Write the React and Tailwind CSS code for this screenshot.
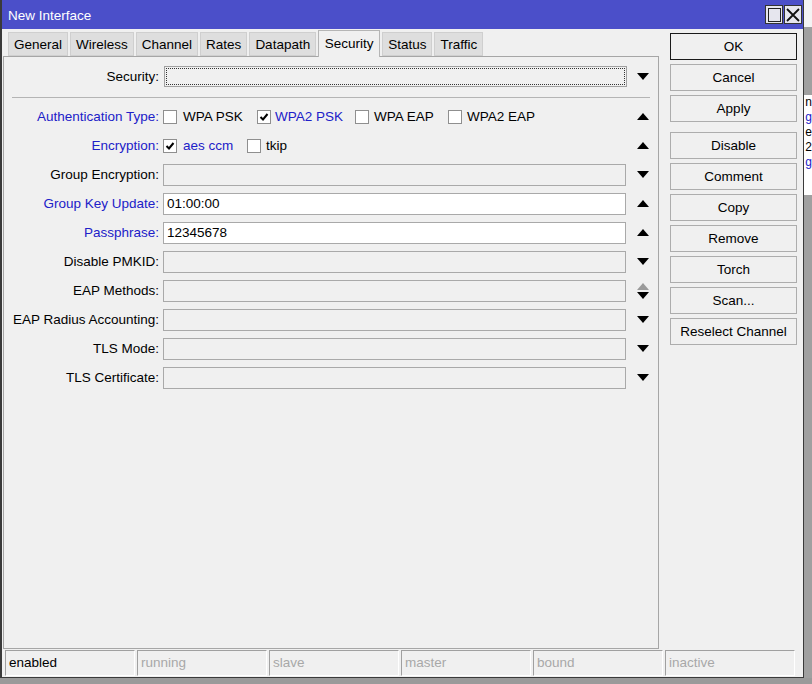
import React from "react";

const F = { fontFamily: '"Liberation Sans", Arial, sans-serif' };

function Down({ color = "#000" }) {
  return (
    <svg width="12" height="7" viewBox="0 0 12 7"><path d="M0 0 H12 L6 7 Z" fill={color} /></svg>
  );
}
function Up({ color = "#000" }) {
  return (
    <svg width="12" height="7" viewBox="0 0 12 7"><path d="M0 7 H12 L6 0 Z" fill={color} /></svg>
  );
}

function Check({ checked }) {
  return (
    <span className="inline-flex w-[14px] h-[14px] bg-white border border-[#8f8f8f] items-center justify-center shrink-0">
      {checked && (
        <svg width="10" height="10" viewBox="0 0 10 10">
          <path d="M1.5 5 L4 7.5 L8.5 2" stroke="#000" strokeWidth="2" fill="none" />
        </svg>
      )}
    </span>
  );
}

function Row({ label, blue, children, arrow }) {
  return (
    <div className="flex items-center h-[29px]">
      <div className={`w-[155px] text-right text-[13.5px] pt-[1px] ${blue ? "text-[#2020c8]" : "text-black"}`}>{label}</div>
      <div className="ml-[4px] w-[463px] flex items-center">{children}</div>
      <div className="w-[27px] flex justify-center ml-[3px]">{arrow}</div>
    </div>
  );
}

function Field({ value, white }) {
  return (
    <div className={`w-full h-[22px] border border-[#a9a9a9] flex items-center px-[3px] pt-[1px] text-[13.5px] text-black ${white ? "bg-white" : "bg-[#f0f0f0]"}`}>
      {value}
    </div>
  );
}

const tabs = ["General", "Wireless", "Channel", "Rates", "Datapath", "Security", "Status", "Traffic"];
const buttons1 = ["Cancel", "Apply"];
const buttons2 = ["Disable", "Comment", "Copy", "Remove", "Torch", "Scan...", "Reselect Channel"];

function Btn({ children, ok }) {
  return (
    <div className={`h-[27px] w-[127px] flex items-center justify-center pt-[2px] text-[13.5px] text-black bg-[#f0f0f0] border ${ok ? "border-[#1a1a1a]" : "border-[#adadad]"}`}>
      {children}
    </div>
  );
}

export default function App() {
  return (
    <div className="w-[812px] h-[684px] bg-[#9a9a9a] flex flex-col overflow-hidden" style={F}>
      <div className="flex h-[678px]">
        <div className="w-[807px] h-full flex flex-col bg-[#f0f0f0] border-l-2 border-r border-b border-[#3a3a3a]">
          {/* title */}
          <div className="h-[29px] bg-[#4b4fc9] flex items-center justify-between pl-[6px] pr-[1px]">
            <span className="text-white text-[13.5px] pt-[3px]">New Interface</span>
            <div className="flex gap-[1px]">
              <div className="w-[18px] h-[19px] bg-[#e6e6ee] border border-[#333] flex items-center justify-center">
                <div className="w-[13px] h-[14px] border border-[#222]" />
              </div>
              <div className="w-[18px] h-[19px] bg-[#e6e6ee] border border-[#333] flex items-center justify-center">
                <svg width="14" height="14" viewBox="0 0 14 14"><path d="M1 1 L13 13 M13 1 L1 13" stroke="#111" strokeWidth="1.8" /></svg>
              </div>
            </div>
          </div>
          <div className="flex flex-1">
            {/* left */}
            <div className="w-[661px] flex flex-col pl-[1px]">
              <div className="flex items-end h-[27px] pl-[5px] gap-[2px]">
                {tabs.map((t) =>
                  t === "Security" ? (
                    <div key={t} className="h-[27px] w-[62px] justify-center bg-[#f0f0f0] border border-b-0 border-[#b5b5b5] text-[13.5px] flex items-start pt-[3px] -mb-[1px] relative z-10">{t}</div>
                  ) : (
                    <div key={t} className="h-[24px] px-[5px] pt-[2px] bg-[#dedede] border border-[#cfcfcf] text-[13.5px] flex items-center">{t}</div>
                  )
                )}
              </div>
              <div className="w-[656px] h-[593px] border border-[#a6a6a6] bg-[#f0f0f0] pt-[5px]">
                <div className="flex items-center h-[29px]">
                  <div className="w-[155px] text-right text-[13.5px] pt-[1px]">Security:</div>
                  <div className="ml-[5px] w-[463px] h-[21px] border border-[#a0a0a0] p-[1px]">
                    <div className="w-full h-full border border-dotted border-[#333]" />
                  </div>
                  <div className="w-[27px] flex justify-center ml-[2px]"><Down /></div>
                </div>
                <div className="ml-[8px] w-[638px] h-[1px] bg-[#b4b4b4] mt-[6px] mb-[4px]" />
                <Row label="Authentication Type:" blue arrow={<Up />}>
                  <div className="flex items-center text-[13.5px]">
                    <Check />
                    <span className="ml-[6px] w-[74px] pt-[1px]">WPA PSK</span>
                    <Check checked />
                    <span className="ml-[4px] w-[80px] pt-[1px] text-[#2020c8]">WPA2 PSK</span>
                    <Check />
                    <span className="ml-[5px] w-[74px] pt-[1px]">WPA EAP</span>
                    <Check />
                    <span className="ml-[5px] pt-[1px]">WPA2 EAP</span>
                  </div>
                </Row>
                <Row label="Encryption:" blue arrow={<Up />}>
                  <div className="flex items-center text-[13.5px]">
                    <Check checked />
                    <span className="ml-[6px] w-[64px] pt-[1px] text-[#2020c8]">aes ccm</span>
                    <Check />
                    <span className="ml-[5px] pt-[1px]">tkip</span>
                  </div>
                </Row>
                <Row label="Group Encryption:" arrow={<Down />}><Field /></Row>
                <Row label="Group Key Update:" blue arrow={<Up />}><Field white value="01:00:00" /></Row>
                <Row label="Passphrase:" blue arrow={<Up />}><Field white value="12345678" /></Row>
                <Row label="Disable PMKID:" arrow={<Down />}><Field /></Row>
                <Row
                  label="EAP Methods:"
                  arrow={
                    <div className="flex flex-col gap-[2px]">
                      <Up color="#9a9a9a" />
                      <Down />
                    </div>
                  }
                >
                  <Field />
                </Row>
                <Row label="EAP Radius Accounting:" arrow={<Down />}><Field /></Row>
                <Row label="TLS Mode:" arrow={<Down />}><Field /></Row>
                <Row label="TLS Certificate:" arrow={<Down />}><Field /></Row>
              </div>
            </div>
            {/* right buttons */}
            <div className="flex flex-col pt-[4px] ml-[7px]">
              <Btn ok>OK</Btn>
              <div className="flex flex-col gap-[4px] mt-[4px]">
                {buttons1.map((b) => <Btn key={b}>{b}</Btn>)}
              </div>
              <div className="flex flex-col gap-[4px] mt-[10px]">
                {buttons2.map((b) => <Btn key={b}>{b}</Btn>)}
              </div>
            </div>
          </div>
          {/* status bar */}
          <div className="flex gap-[2px] pl-[3px] pb-[1px] h-[27px]">
            {["enabled", "running", "slave", "master", "bound", "inactive"].map((s, i) => (
              <div
                key={s}
                className={`w-[130px] h-[26px] border-t border-l border-[#a0a0a0] border-r border-b border-r-white border-b-white flex items-center pl-[3px] text-[13.5px] ${i === 0 ? "text-black" : "text-[#a8a8a8]"}`}
              >
                {s}
              </div>
            ))}
          </div>
        </div>
        <div className="flex-1 flex flex-col text-[12px] leading-[15px]">
          <div className="h-[27px] bg-[#f4f4f4]" />
          <div className="h-[68px] bg-[#a0a0a0]" />
          <div className="h-[100px] bg-white pl-[1px] overflow-hidden">
            <div className="text-black">n</div>
            <div className="text-[#2020c8]">g</div>
            <div className="text-black">e</div>
            <div className="text-black">2</div>
            <div className="text-[#2020c8]">g</div>
          </div>
          <div className="flex-1 bg-[#a0a0a0]" />
        </div>
      </div>
      <div className="flex-1 bg-[#9a9a9a]" />
    </div>
  );
}
